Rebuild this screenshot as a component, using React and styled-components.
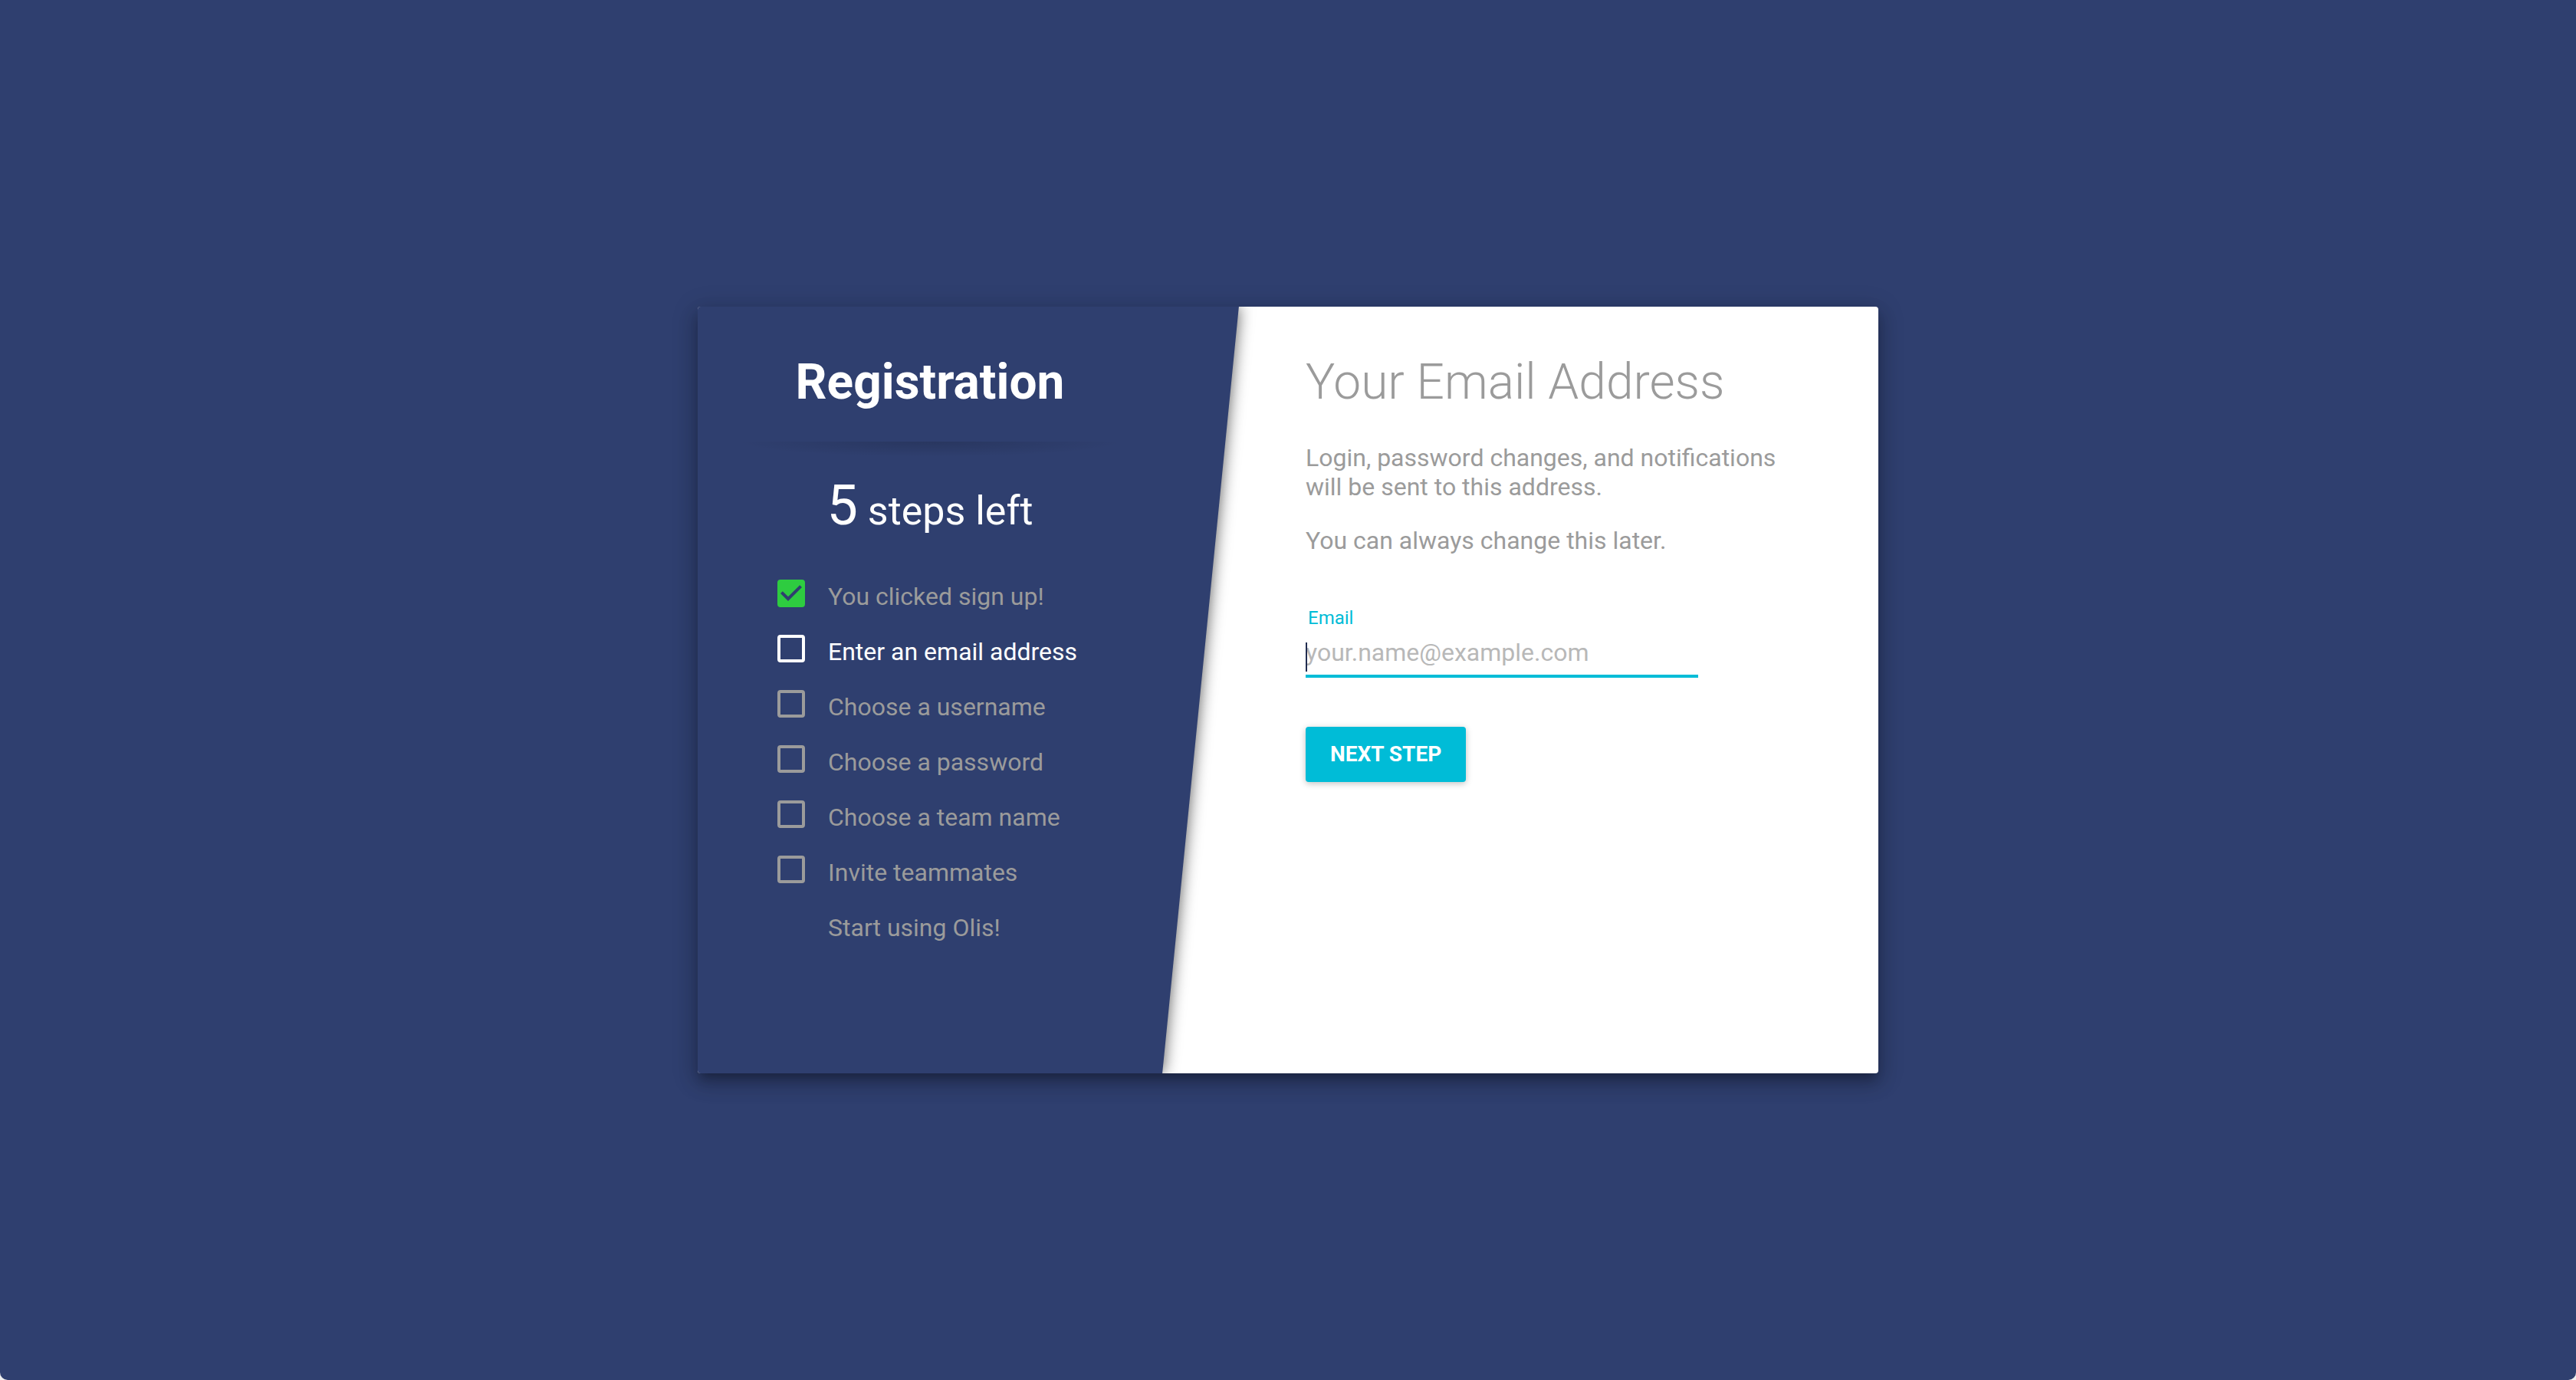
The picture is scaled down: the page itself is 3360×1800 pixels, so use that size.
import React, { useState } from 'react';
import styled, { createGlobalStyle } from 'styled-components';

const navy = '#2f3f6f';
const grey = '#9b9b9b';
const cyan = '#00bcd7';

const GlobalStyle = createGlobalStyle`
  *, *::before, *::after { box-sizing: border-box; }
  body {
    margin: 0;
    background: #f0f0f0;
    font-family: Roboto, "Liberation Sans", sans-serif;
  }
`;

const Page = styled.main`
  display: flex;
  align-items: center;
  justify-content: center;
  min-height: 100vh;
  padding: 32px;
  background: ${navy};
  border-radius: 0 0 10px 10px;
`;

const Card = styled.div`
  display: flex;
  width: 100%;
  max-width: 1540px;
  min-height: 1000px;
  overflow: hidden;
  background: #fff;
  border-radius: 4px;
  box-shadow:
    0 10px 12px -4px rgba(0, 0, 0, 0.22),
    0 12px 24px 2px rgba(0, 0, 0, 0.16),
    0 6px 32px 6px rgba(0, 0, 0, 0.12);
`;

const Progress = styled.aside`
  position: relative;
  isolation: isolate;
  flex: 0 0 606px;
  padding: 56px 48px;
  color: #fff;

  &::before {
    content: '';
    position: absolute;
    inset: 0 -50px 0 -60px;
    z-index: -1;
    background: ${navy};
    box-shadow: 0 0 20px rgba(0, 0, 0, 0.65);
    transform: skewX(-5.7deg);
  }
`;

const Brand = styled.h1`
  margin: 0;
  font-size: 64px;
  font-weight: 700;
  line-height: 86px;
  text-align: center;
`;

const Divider = styled.hr`
  height: 20px;
  margin: 34px 0 0;
  border: 0;
  background: radial-gradient(ellipse at top, rgba(0, 0, 0, 0.14), transparent 70%);
`;

const Remaining = styled.p`
  margin: 22px 0 45px;
  font-size: 52px;
  line-height: 84px;
  text-align: center;
`;

const Count = styled.span`
  font-size: 72px;
`;

const Steps = styled.ol`
  margin: 0;
  padding: 0 0 0 56px;
  list-style: none;
`;

const Step = styled.li`
  display: grid;
  grid-template-columns: 36px 1fr;
  column-gap: 30px;
  height: 72px;
  color: ${(p) => (p.$current ? '#fff' : grey)};
  font-size: 32px;
  line-height: 48px;
`;

const Tick = styled.span`
  display: grid;
  width: 36px;
  height: 36px;
  margin-top: 2px;

  > * { grid-area: 1 / 1; }
`;

const Box = styled.input`
  appearance: none;
  width: 36px;
  height: 36px;
  margin: 0;
  border: 4px solid currentColor;
  border-radius: 4px;
  color: inherit;

  &:checked {
    color: #2ecc40;
    background: currentColor;
  }
`;

const StepLabel = styled.label`
  grid-column: 2;
`;

const Content = styled.section`
  flex: 1;
  padding: 56px 64px 56px 187px;
  color: ${grey};
`;

const Title = styled.h2`
  margin: 0 0 36px;
  font-size: 64px;
  font-weight: 300;
  line-height: 86px;
`;

const Text = styled.p`
  max-width: 640px;
  margin: 0 0 32px;
  font-size: 32px;
  line-height: 38px;
`;

const Form = styled.form`
  display: flex;
  flex-direction: column;
  align-items: flex-start;
  margin-top: 64px;
`;

const FieldLabel = styled.label`
  padding-left: 3px;
  color: ${cyan};
  font-size: 24px;
  line-height: 36px;
`;

const Field = styled.div`
  position: relative;
  width: 100%;
  max-width: 512px;
  margin: 4px 0 64px;
`;

const Input = styled.input`
  display: block;
  width: 100%;
  height: 56px;
  padding: 0 0 6px;
  border: 0;
  border-bottom: 4px solid ${cyan};
  outline: 0;
  background: transparent;
  color: ${navy};
  caret-color: transparent;
  font: 400 32px/46px Roboto, "Liberation Sans", sans-serif;

  &::placeholder { color: #b8b8b8; opacity: 1; }
`;

const Caret = styled.span`
  position: absolute;
  left: 0;
  bottom: 8px;
  width: 2px;
  height: 38px;
  background: #212d50;
`;

const Button = styled.button`
  height: 72px;
  padding: 0 32px;
  border: 0;
  border-radius: 4px;
  background: ${cyan};
  box-shadow: 0 2px 8px rgba(0, 0, 0, 0.25);
  color: #fff;
  font: 700 28px/72px Roboto, "Liberation Sans", sans-serif;
`;

const steps = [
  { id: 'signup', text: 'You clicked sign up!', done: true },
  { id: 'email', text: 'Enter an email address', current: true },
  { id: 'username', text: 'Choose a username' },
  { id: 'password', text: 'Choose a password' },
  { id: 'team', text: 'Choose a team name' },
  { id: 'invite', text: 'Invite teammates' },
];

export default function App() {
  const [email, setEmail] = useState('');
  const left = steps.filter((s) => !s.done).length;

  return (
    <>
      <GlobalStyle />
      <Page>
        <Card>
          <Progress>
            <Brand>Registration</Brand>
            <Divider />
            <Remaining>
              <Count>{left}</Count> steps left
            </Remaining>
            <Steps>
              {steps.map((s) => (
                <Step key={s.id} $current={s.current}>
                  <Tick>
                    <Box type="checkbox" id={s.id} checked={!!s.done} readOnly />
                    {s.done && (
                      <svg width="36" height="36" viewBox="3 3 18 18" fill={navy} aria-hidden="true">
                        <path d="M10 17l-5-5 1.41-1.41L10 14.17l7.59-7.59L19 8l-9 9z" />
                      </svg>
                    )}
                  </Tick>
                  <StepLabel htmlFor={s.id}>{s.text}</StepLabel>
                </Step>
              ))}
              <Step>
                <StepLabel as="span">Start using Olis!</StepLabel>
              </Step>
            </Steps>
          </Progress>
          <Content>
            <Title>Your Email Address</Title>
            <Text>Login, password changes, and notifications will be sent to this address.</Text>
            <Text>You can always change this later.</Text>
            <Form onSubmit={(e) => e.preventDefault()}>
              <FieldLabel htmlFor="address">Email</FieldLabel>
              <Field>
                <Input
                  id="address"
                  type="email"
                  placeholder="your.name@example.com"
                  value={email}
                  onChange={(e) => setEmail(e.target.value)}
                />
                {!email && <Caret />}
              </Field>
              <Button type="submit">NEXT STEP</Button>
            </Form>
          </Content>
        </Card>
      </Page>
    </>
  );
}
